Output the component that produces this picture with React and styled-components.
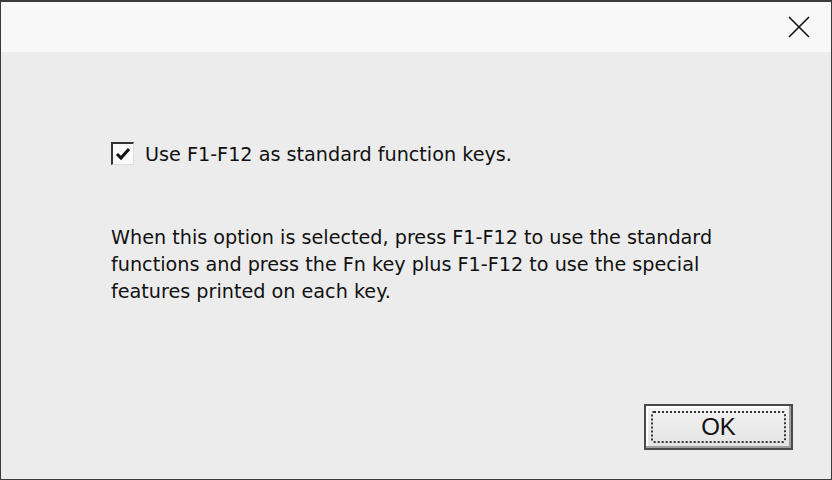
import styled, { createGlobalStyle } from "styled-components";

const Global = createGlobalStyle`
  html, body {
    margin: 0;
    padding: 0;
    background: #ececec;
  }
  body {
    font-family: "DejaVu Sans", "Liberation Sans", sans-serif;
  }
`;

const Window = styled.div`
  box-sizing: border-box;
  width: 832px;
  height: 480px;
  border: 1px solid #3a3a3a;
  border-top-width: 2px;
  display: flex;
  flex-direction: column;
  background: #ececec;
`;

const TitleBar = styled.div`
  height: 50px;
  background: #f8f8f8;
  display: flex;
  justify-content: flex-end;
  align-items: center;
`;

const CloseButton = styled.div`
  width: 46px;
  height: 50px;
  display: flex;
  align-items: center;
  justify-content: center;
  margin-right: 9px;
`;

const Body = styled.div`
  flex: 1;
  display: flex;
  flex-direction: column;
  padding: 91px 0 0 110px;
`;

const CheckRow = styled.label`
  display: flex;
  align-items: center;
  gap: 11px;
  font-size: 19.2px;
  color: #111;
`;

const Box = styled.span`
  box-sizing: border-box;
  width: 23px;
  height: 23px;
  margin-top: -2px;
  background: #fafafa;
  border-top: 2px solid #333;
  border-left: 2px solid #333;
  border-right: 1px solid #ddd;
  border-bottom: 1px solid #ddd;
  display: flex;
  align-items: center;
  justify-content: center;
`;

const Description = styled.p`
  margin: 58px 0 0;
  font-size: 19.2px;
  line-height: 27px;
  color: #111;
  width: 640px;
`;

const Footer = styled.div`
  margin-top: auto;
  display: flex;
  justify-content: flex-end;
  padding: 0 38px 29px 0;
`;

const Button = styled.button`
  box-sizing: border-box;
  width: 149px;
  height: 46px;
  background: linear-gradient(#f2f2f2, #e4e4e4);
  border: 2px solid #4a4a4a;
  box-shadow: inset -2px -2px 0 #a0a0a0, inset 2px 2px 0 #ffffff;
  padding: 5px;
  font-family: "Liberation Sans", sans-serif;
  font-size: 24px;
  color: #111;
`;

const Focus = styled.span`
  display: flex;
  align-items: center;
  justify-content: center;
  height: 100%;
  border: 2px dotted #333;
  border-radius: 3px;
  box-sizing: border-box;
`;

export default function App() {
  return (
    <>
      <Global />
      <Window>
        <TitleBar>
          <CloseButton>
            <svg width="22" height="22" viewBox="0 0 22 22">
              <path d="M1 1 L21 21 M21 1 L1 21" stroke="#111" strokeWidth="1.6" fill="none" />
            </svg>
          </CloseButton>
        </TitleBar>
        <Body>
          <CheckRow>
            <Box>
              <svg width="16" height="14" viewBox="0 0 16 14">
                <path d="M2 7 L6 11 L14 2" stroke="#111" strokeWidth="3" fill="none" />
              </svg>
            </Box>
            Use F1-F12 as standard function keys.
          </CheckRow>
          <Description>
            When this option is selected, press F1-F12 to use the standard
            functions and press the Fn key plus F1-F12 to use the special
            features printed on each key.
          </Description>
          <Footer>
            <Button>
              <Focus>OK</Focus>
            </Button>
          </Footer>
        </Body>
      </Window>
    </>
  );
}
